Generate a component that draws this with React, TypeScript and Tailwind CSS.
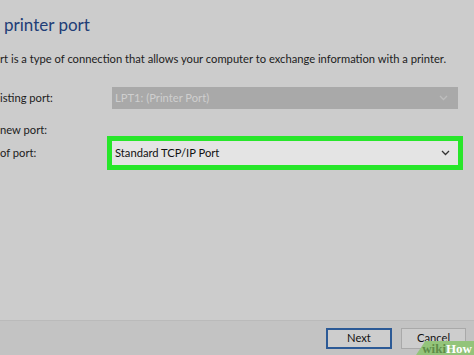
import React from "react";

const font = { fontFamily: 'Lato, "Noto Sans", sans-serif' };

function Chevron({ color }: { color: string }) {
  return (
    <svg width="9" height="6" viewBox="0 0 9 6" className="shrink-0">
      <polyline points="1,1 4.5,4.5 8,1" fill="none" stroke={color} strokeWidth="1.3" />
    </svg>
  );
}

export default function App() {
  return (
    <div
      className="relative w-[474px] h-[355px] overflow-hidden bg-[#cccccc] flex flex-col text-[#1c1c1c]"
      style={font}
    >
      <div className="flex-1 flex flex-col pr-[10px]">
        <h1 className="pl-[4px] pt-[13px] text-[17px] leading-[24px] text-[#213d77]">printer port</h1>
        <p className="mt-[14px] text-[11.2px] leading-[16px] whitespace-nowrap">
          rt is a type of connection that allows your computer to exchange information with a printer.
        </p>

        <div className="mt-[20px] flex items-center h-[22px]">
          <span className="w-[112px] text-[11.2px]">isting port:</span>
          <div className="flex-1 mr-[6px] h-full bg-[#a9a9a9] flex items-center justify-between pl-[3px] pr-[10px]">
            <span className="text-[11.2px] text-[#cfcfcf]">LPT1: (Printer Port)</span>
            <Chevron color="#bdbdbd" />
          </div>
        </div>

        <div className="mt-[13px] text-[11.2px] leading-[16px]">new port:</div>

        <div className="-mt-[2px] flex items-center">
          <span className="w-[107px] text-[11.2px]">of port:</span>
          <div className="flex-1 mr-[1px] border-[5px] border-[#27e62a]">
            <div className="h-[24px] bg-[#e4e4e4] flex items-center justify-between pl-[3px] pr-[8px]">
              <span className="text-[11.2px] text-[#111]">Standard TCP/IP Port</span>
              <Chevron color="#333" />
            </div>
          </div>
        </div>
      </div>

      <div className="h-[35px] border-t border-[#bababa] bg-[#c3c3c3] flex items-center justify-end gap-[9px] pr-[8px]">
        <button className="w-[66px] h-[21px] border-2 border-[#2c5a96] bg-[#cdcdcd] text-[11.2px] leading-none text-[#111]">
          Next
        </button>
        <button className="w-[65px] h-[21px] border border-[#a9a9a9] bg-[#cdcdcd] text-[11.2px] leading-none text-[#111]">
          Cancel
        </button>
      </div>

      <div
        className="absolute right-0 bottom-0 w-[58px] h-[14px] bg-[#93c47a] flex items-center justify-end pr-[2px] text-[13px] font-bold leading-none"
        style={{ clipPath: "polygon(16% 0, 100% 0, 100% 100%, 0 100%)", fontFamily: '"Liberation Serif", serif' }}
      >
        <span className="text-[#5e8c48]">wiki</span>
        <span className="text-white">How</span>
      </div>
    </div>
  );
}
